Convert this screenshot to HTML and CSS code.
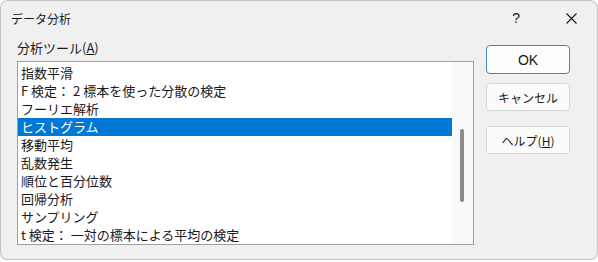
FILE: index.html
```html
<!DOCTYPE html>
<html lang="ja">
<head>
    <meta charset="UTF-8">
    <title>データ分析</title>
    <link rel="stylesheet" href="styles.css">
</head>
<body>
    <div class="window">
        <div class="titlebar">
            <span class="title">データ分析</span>
            <span class="help-mark">?</span>
            <span class="close">
                <svg width="11" height="11" viewBox="0 0 11 11">
                    <path d="M0.5 0.5 L10.5 10.5 M10.5 0.5 L0.5 10.5" stroke="#1a1a1a" stroke-width="1.1" fill="none"/>
                </svg>
            </span>
        </div>

        <div class="content">
            <div class="tools">
                <div class="label">分析ツール(<u>A</u>)</div>
                <div class="listbox">
                    <ul class="items">
                        <li>指数平滑</li>
                        <li>F 検定： 2 標本を使った分散の検定</li>
                        <li>フーリエ解析</li>
                        <li class="selected">ヒストグラム</li>
                        <li>移動平均</li>
                        <li>乱数発生</li>
                        <li>順位と百分位数</li>
                        <li>回帰分析</li>
                        <li>サンプリング</li>
                        <li>t 検定： 一対の標本による平均の検定</li>
                    </ul>
                    <div class="scrollbar">
                        <div class="thumb"></div>
                    </div>
                </div>
            </div>

            <div class="buttons">
                <button class="btn default">OK</button>
                <button class="btn">キャンセル</button>
                <button class="btn help">ヘルプ(<u>H</u>)</button>
            </div>
        </div>
    </div>
</body>
</html>
```

FILE: styles.css
```css
body {
    margin: 0;
    background-color: #ffffff;
    font-family: "Noto Sans CJK JP", "Noto Sans", sans-serif;
    color: #1a1a1a;
}

.window {
    width: 596px;
    height: 258px;
    border: 1px solid #c4c4c4;
    border-radius: 8px;
    background-color: #f0f0f0;
    box-shadow: 0 1px 2px rgba(0, 0, 0, 0.12);
    overflow: hidden;
}

.titlebar {
    height: 34px;
    display: flex;
    align-items: center;
    padding-left: 10px;
    font-size: 12px;
}

.title {
    flex-grow: 1;
}

.help-mark {
    font-family: "Liberation Sans", sans-serif;
    font-size: 14px;
    margin-right: 46px;
}

.close {
    display: flex;
    margin-right: 20px;
}

.content {
    display: flex;
    padding-left: 16px;
}

.tools {
    width: 457px;
}

.label {
    font-size: 13px;
    line-height: 16px;
    margin-top: 5px;
    margin-bottom: 5px;
}

.listbox {
    display: flex;
    height: 182px;
    border: 1px solid #a0a0a0;
    background-color: #ffffff;
}

.items {
    flex-grow: 1;
    list-style: none;
    margin: 0;
    padding: 2px 0 0 0;
    font-size: 13px;
}

.items li {
    height: 18px;
    line-height: 18px;
    padding-left: 3px;
    white-space: nowrap;
}

.items li.selected {
    background-color: #0078d4;
    color: #ffffff;
}

.scrollbar {
    width: 21px;
    background-color: #f9f9f9;
    padding-top: 67px;
}

.thumb {
    width: 4px;
    height: 73px;
    margin-left: 8px;
    border-radius: 2px;
    background-color: #8a8a8a;
}

.buttons {
    display: flex;
    flex-direction: column;
    margin-left: 12px;
    padding-top: 10px;
}

.btn {
    width: 84px;
    height: 28px;
    padding: 0;
    border: 1px solid #d6d6d6;
    border-radius: 4px;
    background-color: #fbfbfb;
    font-family: "Noto Sans CJK JP", sans-serif;
    font-size: 12px;
    color: #1a1a1a;
    margin-bottom: 9px;
}

.btn.default {
    height: 29px;
    border-color: #4a86b8;
    background-color: #fdfdfd;
    font-family: "Liberation Sans", sans-serif;
    font-size: 14px;
}

.btn.help {
    margin-top: 6px;
}
```
